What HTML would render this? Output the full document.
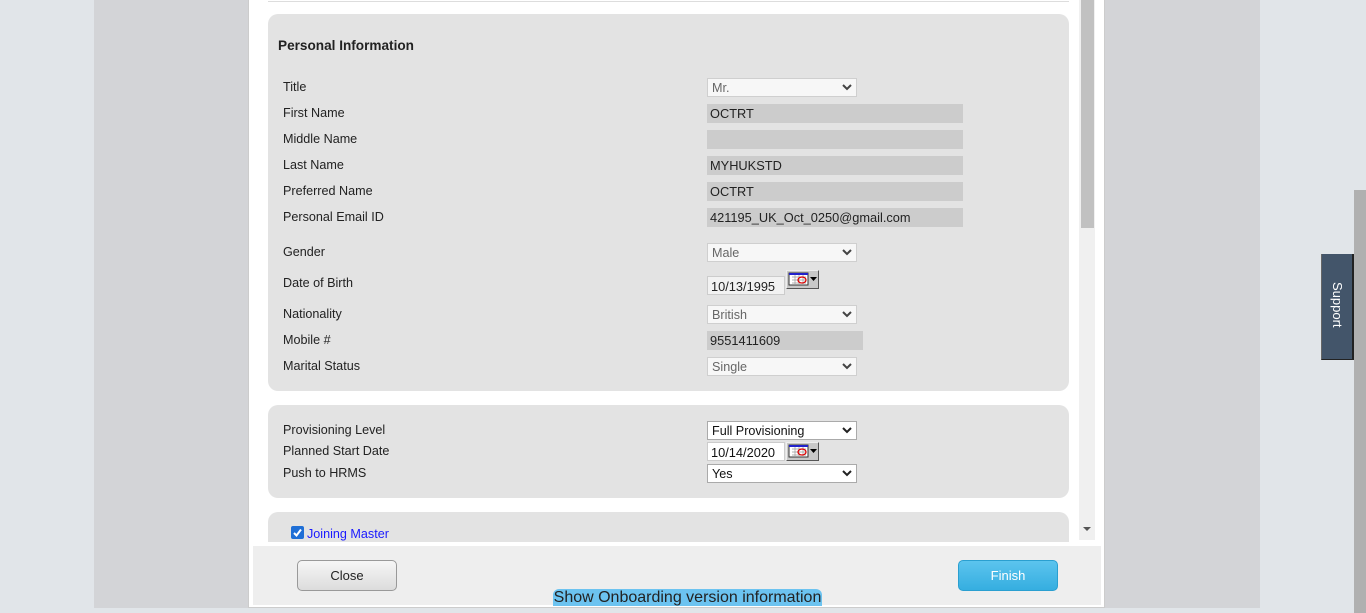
<!DOCTYPE html>
<html><head><style>
*{margin:0;padding:0;box-sizing:border-box}
body{width:1366px;height:613px;overflow:hidden;background:#e1e5e9;font-family:"Liberation Sans",Arial,sans-serif;font-size:13px;color:#222;position:relative}
.a{position:absolute}
.lbl{position:absolute;left:283px;font-size:12.6px;color:#222}
.sel{position:absolute;left:707px;width:150px;height:19px;background:#f7f7f7;border:1px solid #cfcfcf;color:#666;font-size:12.6px;padding:2px 0 0 4px}
.sel.w{background:#fff;border:1px solid #aaa;color:#111}
.sel svg{position:absolute;right:4px;top:5px}
.inp{position:absolute;left:707px;width:256px;height:19px;background:#cccccc;color:#222;font-size:12.8px;padding:2px 0 0 3px}
.panel{position:absolute;left:268px;width:801px;background:#e3e3e3;border-radius:10px}
.cal{position:absolute;width:33px;height:19px;background:#c8c8c8;border:1px solid #555;border-top-color:#eee;border-left-color:#eee}
</style></head><body>
<div class="a" style="left:94px;top:0;width:1166px;height:608px;background:#d3d4d7"></div>
<div class="a" style="left:248px;top:0;width:857px;height:608px;background:#fff;border:1px solid #ccc;border-top:none"></div>
<div class="a" style="left:268px;top:0;width:801px;height:2px;border-bottom:1px solid #ddd"></div>
<div class="a" style="left:1079px;top:0;width:16px;height:540px;background:#f0f0f0"></div>
<div class="a" style="left:1081px;top:0;width:13px;height:228px;background:#c1c1c1"></div>
<div class="a" style="left:1083px;top:527px;width:0;height:0;border-left:4px solid transparent;border-right:4px solid transparent;border-top:4px solid #555"></div>
<div class="a" style="left:1354px;top:190px;width:12px;height:423px;background:#b0b0b0"></div>
<div class="a" style="left:1321px;top:254px;width:33px;height:106px;background:#43556a;border-left:1px solid #666;border-right:2px solid #222;border-bottom:1px solid #222"></div>
<div class="a" style="left:1329px;top:282px;color:#fff;font-size:13px;transform-origin:0 0;transform:translate(16px,0) rotate(90deg)">Support</div>

<div class="panel" style="top:14px;height:377px"></div>
<div class="a" style="left:278px;top:38px;font-weight:bold;font-size:13.6px;color:#222">Personal Information</div>
<div class="lbl" style="top:80px">Title</div>
<div class="lbl" style="top:106px">First Name</div>
<div class="lbl" style="top:132px">Middle Name</div>
<div class="lbl" style="top:158px">Last Name</div>
<div class="lbl" style="top:184px">Preferred Name</div>
<div class="lbl" style="top:210px">Personal Email ID</div>
<div class="lbl" style="top:245px">Gender</div>
<div class="lbl" style="top:276px">Date of Birth</div>
<div class="lbl" style="top:307px">Nationality</div>
<div class="lbl" style="top:333px">Mobile #</div>
<div class="lbl" style="top:359px">Marital Status</div>

<div class="sel" style="top:78px">Mr.<svg width="10" height="7"><path d="M1 1L5 5L9 1" stroke="#444" stroke-width="2" fill="none"/></svg></div>
<div class="inp" style="top:104px">OCTRT</div>
<div class="inp" style="top:130px"></div>
<div class="inp" style="top:156px">MYHUKSTD</div>
<div class="inp" style="top:182px">OCTRT</div>
<div class="inp" style="top:208px">421195_UK_Oct_0250@gmail.com</div>
<div class="sel" style="top:243px">Male<svg width="10" height="7"><path d="M1 1L5 5L9 1" stroke="#444" stroke-width="2" fill="none"/></svg></div>
<div class="a" style="left:707px;top:276px;width:78px;height:19px;background:#f2f2f2;border:1px solid #ccc;padding:2px 0 0 3px;font-size:12.8px">10/13/1995</div>
<div class="cal" style="left:786px;top:270px"><svg width="31" height="17" style="position:absolute;left:0;top:0"><rect x="2" y="2" width="19" height="12" fill="#fff" stroke="#333"/><line x1="2" y1="3" x2="21" y2="3" stroke="#22c" stroke-width="2"/><path d="M5 6H19M5 9H19M5 12H19M8 4V14M12 4V14M16 4V14" stroke="#999" stroke-width="0.7"/><ellipse cx="15" cy="9" rx="4" ry="3" fill="none" stroke="#d00" stroke-width="1.3"/><path d="M23 6H30L26.5 10Z" fill="#000"/></svg></div>
<div class="sel" style="top:305px">British<svg width="10" height="7"><path d="M1 1L5 5L9 1" stroke="#444" stroke-width="2" fill="none"/></svg></div>
<div class="inp" style="top:331px;width:156px">9551411609</div>
<div class="sel" style="top:357px">Single<svg width="10" height="7"><path d="M1 1L5 5L9 1" stroke="#444" stroke-width="2" fill="none"/></svg></div>

<div class="panel" style="top:405px;height:93px"></div>
<div class="lbl" style="top:423px">Provisioning Level</div>
<div class="lbl" style="top:444px">Planned Start Date</div>
<div class="lbl" style="top:466px">Push to HRMS</div>
<div class="sel w" style="top:421px;left:707px">Full Provisioning<svg width="10" height="7"><path d="M1 1L5 5L9 1" stroke="#222" stroke-width="2" fill="none"/></svg></div>
<div class="a" style="left:707px;top:442px;width:78px;height:19px;background:#fff;border:1px solid #ccc;padding:2px 0 0 3px;color:#111;font-size:12.8px">10/14/2020</div>
<div class="cal" style="left:786px;top:442px"><svg width="31" height="17" style="position:absolute;left:0;top:0"><rect x="2" y="2" width="19" height="12" fill="#fff" stroke="#333"/><line x1="2" y1="3" x2="21" y2="3" stroke="#22c" stroke-width="2"/><path d="M5 6H19M5 9H19M5 12H19M8 4V14M12 4V14M16 4V14" stroke="#999" stroke-width="0.7"/><ellipse cx="15" cy="9" rx="4" ry="3" fill="none" stroke="#d00" stroke-width="1.3"/><path d="M23 6H30L26.5 10Z" fill="#000"/></svg></div>
<div class="sel w" style="top:464px;left:707px">Yes<svg width="10" height="7"><path d="M1 1L5 5L9 1" stroke="#222" stroke-width="2" fill="none"/></svg></div>

<div class="a" style="left:268px;top:512px;width:801px;height:30px;background:#e3e3e3;border-radius:10px 10px 0 0;overflow:hidden">
<div class="a" style="left:23px;top:14px;width:13px;height:13px;background:#1f6fd6;border-radius:2px"><svg width="13" height="13"><path d="M3 7L5.5 9.5L10 3.5" stroke="#fff" stroke-width="2" fill="none"/></svg></div>
<div class="a" style="left:39px;top:15px;color:#1a1aff;font-size:12.6px">Joining Master</div>
</div>

<div class="a" style="left:253px;top:546px;width:848px;height:59px;background:#eeeeee"></div>
<div class="a" style="left:297px;top:560px;width:100px;height:31px;border:1px solid #999;border-radius:5px;background:linear-gradient(#f6f6f6,#dcdcdc);text-align:center;line-height:29px;font-size:13px;color:#222">Close</div>
<div class="a" style="left:958px;top:560px;width:100px;height:31px;border:1px solid #2a9fd0;border-radius:5px;background:linear-gradient(#5cc4ee,#35aee0);text-align:center;line-height:29px;font-size:13px;color:#fff">Finish</div>
<div class="a" style="left:553px;top:589px;width:269px;height:17px;background:#6cc3f0;border-radius:6px 6px 0 0;font-size:16px;color:#222;line-height:17px;text-align:center">Show Onboarding version information</div>
</body></html>
